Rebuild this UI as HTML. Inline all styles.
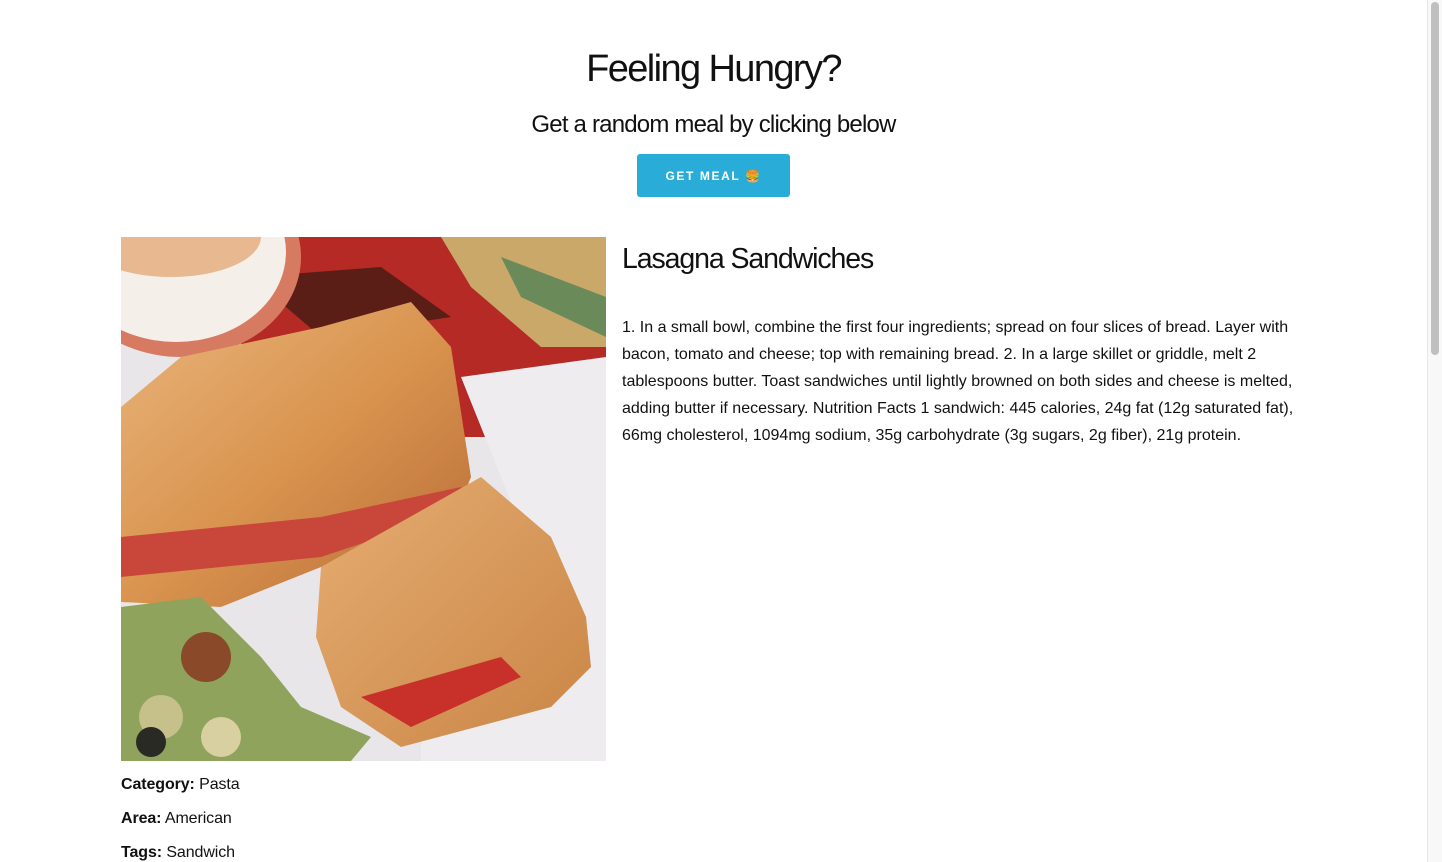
<!DOCTYPE html>
<html><head><style>
body{margin:0;background:#fff;font-family:"Liberation Sans",Arial,sans-serif;color:#111;width:1442px;height:862px;overflow:hidden;position:relative}
h1{position:absolute;top:45px;left:0;width:1427px;text-align:center;margin:0;font-weight:400;font-size:38px;letter-spacing:-1.6px;line-height:48px}
h2{position:absolute;top:109px;left:0;width:1427px;text-align:center;margin:0;font-weight:400;font-size:24px;letter-spacing:-0.8px;line-height:32px}
.btn{position:absolute;left:637px;top:154px;width:153px;height:43px;background:#29acd8;border-radius:3px;color:#fff;font-weight:700;font-size:12px;letter-spacing:1.6px;text-align:center;line-height:44px}
.img{position:absolute;left:121px;top:237px;width:485px;height:524px}
.title{position:absolute;left:622px;top:239px;margin:0;font-weight:400;font-size:28.5px;letter-spacing:-1.1px;line-height:40px}
.desc{position:absolute;left:622px;top:314px;width:690px;font-size:16px;line-height:27px;letter-spacing:0}
.meta{position:absolute;left:121px;font-size:16px;letter-spacing:-0.1px}
.sb{position:absolute;left:1427px;top:0;width:15px;height:862px;background:#f8f8f8;border-left:1px solid #e6e6e6}
.th{position:absolute;left:1431px;top:2px;width:8px;height:353px;background:#bfbfbf;border-radius:4px}
</style></head><body>
<h1>Feeling Hungry?</h1>
<h2>Get a random meal by clicking below</h2>
<div class="btn">GET MEAL 🍔</div>
<svg class="img" viewBox="0 0 485 524" preserveAspectRatio="none">
<defs>
<linearGradient id="t1" x1="0" y1="0" x2="1" y2="1"><stop offset="0" stop-color="#e9b57c"/><stop offset=".5" stop-color="#d9944f"/><stop offset="1" stop-color="#b86a36"/></linearGradient>
<linearGradient id="t2" x1="0" y1="0" x2="1" y2="1"><stop offset="0" stop-color="#e6ad72"/><stop offset="1" stop-color="#c98545"/></linearGradient>
</defs>
<rect width="485" height="524" fill="#e9e6ea"/>
<rect x="120" y="0" width="365" height="200" fill="#b52a25"/>
<path d="M320 0 L485 0 L485 110 L420 110 L350 50Z" fill="#c9a86a"/>
<path d="M380 20 L485 60 L485 100 L400 60Z" fill="#6b8a5a"/>
<path d="M130 40 L260 30 L330 80 L200 100Z" fill="#5a1e16"/>
<path d="M340 140 L485 120 L485 524 L300 524 L300 400 L420 340Z" fill="#efecef"/>
<ellipse cx="60" cy="20" rx="120" ry="100" fill="#d77a62"/>
<ellipse cx="55" cy="15" rx="110" ry="90" fill="#f5efe9"/>
<ellipse cx="50" cy="0" rx="90" ry="40" fill="#e8b890"/>
<path d="M0 170 L60 120 L200 90 L290 65 L330 110 L350 240 L330 290 L200 330 L100 370 L0 365Z" fill="url(#t1)"/>
<path d="M0 300 L200 280 L340 250 L350 270 L200 320 L0 340Z" fill="#c8473a"/>
<path d="M200 330 L360 240 L430 300 L465 380 L470 430 L430 470 L280 510 L220 470 L195 400Z" fill="url(#t2)"/>
<path d="M240 460 L380 420 L400 440 L290 490Z" fill="#c8302a"/>
<path d="M0 370 L80 360 L140 420 L180 470 L250 500 L230 524 L0 524Z" fill="#8fa35c"/>
<circle cx="85" cy="420" r="25" fill="#8a4a2a"/>
<circle cx="40" cy="480" r="22" fill="#c6c08a"/>
<circle cx="30" cy="505" r="15" fill="#2a2a25"/>
<circle cx="100" cy="500" r="20" fill="#d8d0a0"/>
</svg>
<h3 class="title">Lasagna Sandwiches</h3>
<div class="desc">1. In a small bowl, combine the first four ingredients; spread on four slices of bread. Layer with bacon, tomato and cheese; top with remaining bread. 2. In a large skillet or griddle, melt 2 tablespoons butter. Toast sandwiches until lightly browned on both sides and cheese is melted, adding butter if necessary. Nutrition Facts 1 sandwich: 445 calories, 24g fat (12g saturated fat), 66mg cholesterol, 1094mg sodium, 35g carbohydrate (3g sugars, 2g fiber), 21g protein.</div>
<div class="meta" style="top:776px"><b>Category:</b> Pasta</div>
<div class="meta" style="top:810px"><b>Area:</b> American</div>
<div class="meta" style="top:844px"><b>Tags:</b> Sandwich</div>
<div class="sb"></div><div class="th"></div>
</body></html>
